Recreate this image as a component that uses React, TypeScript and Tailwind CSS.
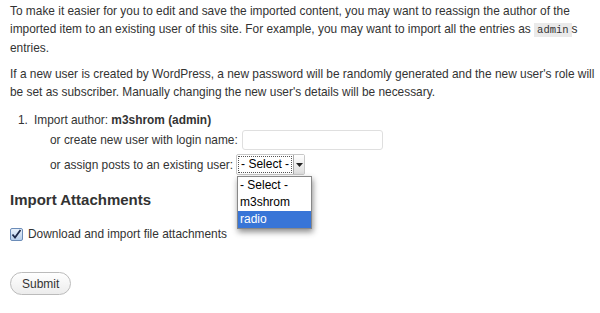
import React from "react";

const App: React.FC = () => {
  return (
    <div className="w-[600px] h-[313px] bg-white px-[10px] pt-[2px] text-[11.9px] leading-[18px] text-[#333] font-['Liberation_Sans',Arial,sans-serif] overflow-hidden whitespace-nowrap">
      <p>
        To make it easier for you to edit and save the imported content, you may want to reassign the author of the
        <br />
        imported item to an existing user of this site. For example, you may want to import all the entries as{" "}
        <code className="bg-[#eaeaea] px-[3px] py-[1px] text-[10.5px] font-['Liberation_Mono',monospace]">admin</code>s
        <br />
        entries.
      </p>
      <p className="mt-[8px]">
        If a new user is created by WordPress, a new password will be randomly generated and the new user's role will
        <br />
        be set as subscriber. Manually changing the new user's details will be necessary.
      </p>

      <ol className="mt-[10px] pl-[8px]">
        <li className="flex">
          <span className="w-[16px]">1.</span>
          <div>
            <div>
              Import author: <strong>m3shrom (admin)</strong>
            </div>
            <div className="pl-[16px] mt-[1px] flex items-center h-[20px]">
              or create new user with login name:
              <input
                type="text"
                className="ml-[4px] w-[141px] h-[20px] border border-[#dfdfdf] rounded-[3px] bg-white"
              />
            </div>
            <div className="pl-[16px] mt-[4px] flex items-center h-[21px] relative">
              or assign posts to an existing user:
              <div className="ml-[3px] flex h-[21px] border border-[#c8c8c8] rounded-[2px] bg-white">
                <span className="m-[1px] px-[2px] border border-dotted border-[#555] leading-[15px] text-[12px] text-black">
                  - Select -
                </span>
                <span className="w-[11px] border-l border-[#aaa] bg-[linear-gradient(#fff,#ddd)] flex items-center justify-center">
                  <svg width="7" height="4" viewBox="0 0 7 4">
                    <path d="M0 0h7L3.5 4z" fill="#222" />
                  </svg>
                </span>
              </div>
              <div className="absolute left-[203px] top-[22px] w-[75px] bg-white border border-[#888] shadow-[1px_3px_6px_rgba(0,0,0,0.45)] z-10 leading-[17px] text-[12px] text-black">
                <div className="px-[2px]">- Select -</div>
                <div className="px-[2px]">m3shrom</div>
                <div className="px-[2px] bg-[#3875d7] text-white">radio</div>
              </div>
            </div>
          </div>
        </li>
      </ol>

      <h3 className="mt-[14px] text-[15px] leading-[22px] font-bold text-[#333]">Import Attachments</h3>

      <label className="mt-[14px] flex items-center">
        <span className="w-[13px] h-[13px] rounded-[2px] border border-[#6b8cb8] bg-[linear-gradient(#e8f1fb,#b7cfec)] flex items-center justify-center">
          <svg width="11" height="11" viewBox="0 0 11 11">
            <path d="M1.5 5.5l2.5 3L9.5 1" stroke="#1d2a4a" strokeWidth="1.8" fill="none" />
          </svg>
        </span>
        <span className="ml-[5px]">Download and import file attachments</span>
      </label>

      <div className="mt-[29px]">
        <button className="h-[23px] px-[11px] rounded-full border border-[#bbb] bg-[linear-gradient(#fff,#ececec)] text-[12px] text-[#333]">
          Submit
        </button>
      </div>
    </div>
  );
};

export default App;
